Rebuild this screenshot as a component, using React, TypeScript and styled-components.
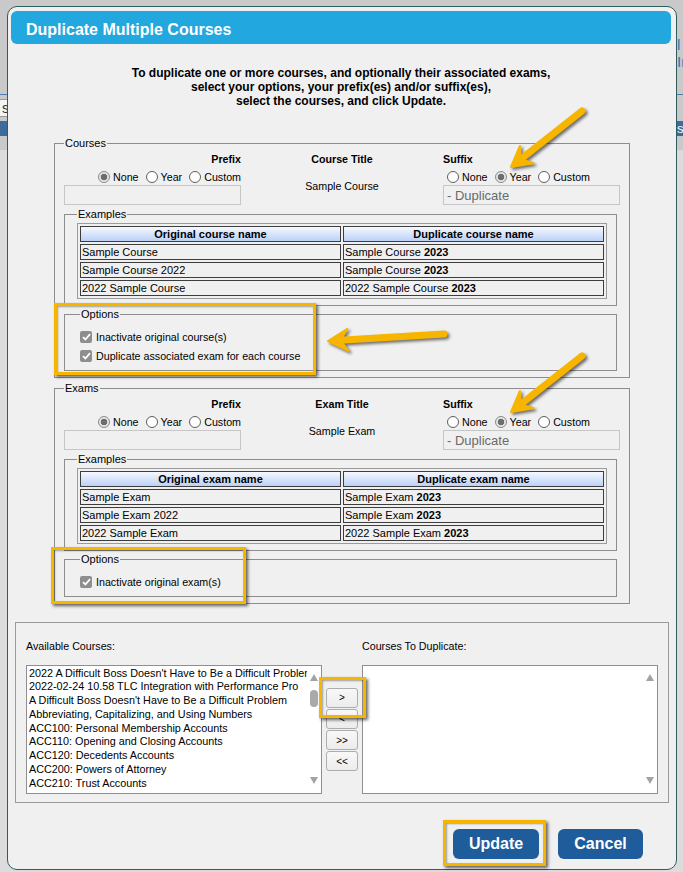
import styled, { createGlobalStyle } from "styled-components"

const GlobalStyle = createGlobalStyle`
  html, body {
    margin: 0;
    padding: 0;
  }
  body {
    width: 683px;
    height: 872px;
    overflow: hidden;
    background: #c9c9c9;
    font-family: "Liberation Sans", Arial, sans-serif;
    font-size: 10.7px;
    color: #000;
  }
`

/* ---------- page behind the modal ---------- */

const Backdrop = styled.div`
  height: 872px;
  display: flex;
  flex-direction: column;
  padding-top: 36px;
  box-sizing: border-box;
`

const BackNav = styled.div`
  padding-left: 677px;
  white-space: nowrap;
  color: #3573b9;
  font-size: 15px;
  line-height: 17px;
`

const BackRule = styled.div`
  margin-top: 24px;
  height: 1px;
  background: #4f7bab;
`

const BackToolbar = styled.div`
  height: 26px;
  display: flex;
  align-items: center;
`

const BackField = styled.div`
  width: 30px;
  height: 18px;
  box-sizing: border-box;
  margin-left: -20px;
  border: 1px solid #9a9a9a;
  background: #f4f4f4;
  font-size: 14px;
  line-height: 16px;
  text-align: right;
  color: #333;
`

const BackHeader = styled.div`
  height: 15px;
  background: #3e6b9e;
  color: #fff;
  font-size: 13px;
  line-height: 15px;
  padding-left: 677px;
  white-space: nowrap;
`

const BackBody = styled.div`
  flex: 1;
  margin-top: 14px;
  background: #dcdcdc;
`

/* ---------- modal ---------- */

const Dialog = styled.div`
  position: absolute;
  left: 7px;
  top: 6px;
  width: 670px;
  box-sizing: border-box;
  border: 1px solid #2d5d5d;
  border-radius: 10px;
  background: #f0f0f0;
  padding: 4px 5px 0 3px;
`

const TitleBar = styled.div`
  height: 33px;
  box-sizing: border-box;
  padding: 5px 0 0 15px;
  border-radius: 6px;
  background: #22a7de;
  color: #fff;
  font-size: 16px;
  font-weight: bold;
  line-height: 28px;
`

const Intro = styled.p`
  margin: 0;
  padding-top: 22px;
  text-align: center;
  font-size: 12px;
  font-weight: bold;
  line-height: 14px;
`

const Group = styled.fieldset<{ $gap?: number }>`
  margin: ${(p) => p.$gap ?? 0}px 41px 0 43px;
  padding: 4px 9px 6px 9px;
  border: 1px solid #8d8d8d;
  min-inline-size: 0;
`

const SubGroup = styled.fieldset<{ $gap: number; $pad: string }>`
  margin: ${(p) => p.$gap}px 3px 0 0;
  padding: ${(p) => p.$pad};
  border: 1px solid #8d8d8d;
  min-inline-size: 0;
`

const Legend = styled.legend`
  padding: 0 1px;
  font-size: 11px;
  line-height: 12px;
`

const NameGrid = styled.div`
  display: grid;
  grid-template-columns: 177px 1fr 177px;
`

const NameColumn = styled.div<{ $align: "flex-start" | "center" | "flex-end" }>`
  display: flex;
  flex-direction: column;
  align-items: ${(p) => p.$align};
`

const ColumnLabel = styled.div`
  font-weight: bold;
  line-height: 13px;
`

const SampleTitle = styled.div`
  margin-top: 14px;
  line-height: 13px;
`

const RadioGroup = styled.div`
  margin-top: 4px;
  height: 14px;
  display: flex;
  align-items: center;
  gap: 3px;
`

const RadioOption = styled.label`
  display: inline-flex;
  align-items: center;
  line-height: 14px;
`

const RadioDot = styled.span<{ $checked?: boolean }>`
  width: 12px;
  height: 12px;
  box-sizing: border-box;
  margin: 0 3px 0 4px;
  border-radius: 50%;
  border: 1px solid ${(p) => (p.$checked ? "#8a8a8a" : "#5e5e5e")};
  background: ${(p) =>
    p.$checked
      ? "radial-gradient(circle, #6e6e6e 0 3px, #e6e6e6 3.6px)"
      : "#fff"};
`

const AffixInput = styled.input`
  margin-top: 1px;
  width: 100%;
  height: 20px;
  box-sizing: border-box;
  border: 1px solid #c6c6c6;
  background: #f0f0f0;
  padding: 0 3px;
  font-family: "Liberation Sans", Arial, sans-serif;
  font-size: 13px;
  color: #6a6a6a;
  outline: none;
`

const ExampleTable = styled.table`
  width: 100%;
  border: 1px solid #9b9b9b;
  border-spacing: 2px;
  font-size: 11px;
`

const HeadCell = styled.th`
  width: 50%;
  padding: 0 1px;
  border: 1px solid #3d3d3d;
  background: linear-gradient(#f5f8ff, #bcd1f6);
  font-weight: bold;
  line-height: 14px;
`

const Cell = styled.td`
  padding: 0 1px;
  border: 1px solid #3d3d3d;
  line-height: 14px;
  white-space: nowrap;
`

const OptionRow = styled.label`
  height: 19.5px;
  display: flex;
  align-items: center;
  gap: 4px;
`

const CheckMark = styled.span`
  width: 12px;
  height: 12px;
  border-radius: 2px;
  background: #8e8e8e;
  display: inline-flex;
  align-items: center;
  justify-content: center;
`

/* ---------- course picker ---------- */

const PickerPanel = styled.div`
  margin: 18px 2px 0 4px;
  padding: 17px 10px 8px 10px;
  border: 1px solid #9b9b9b;
  display: grid;
  grid-template-columns: 296px 32px 296px;
  column-gap: 4px;
  row-gap: 13px;
`

const PickerLabel = styled.div<{ $col: number }>`
  grid-column: ${(p) => p.$col};
  line-height: 12px;
`

const ListBox = styled.div`
  height: 129px;
  box-sizing: border-box;
  border: 1px solid #8f8f8f;
  background: #fff;
  display: flex;
  overflow: hidden;
`

const ListItems = styled.div`
  flex: 1;
  min-width: 0;
  overflow: hidden;
  padding: 1px 0 0 2px;
`

const ListItem = styled.div`
  font-size: 10.8px;
  line-height: 13.8px;
  white-space: nowrap;
`

const ScrollTrack = styled.div`
  width: 14px;
  flex: none;
  display: flex;
  flex-direction: column;
  align-items: center;
  padding: 8px 0 9px;
  box-sizing: border-box;
`

const ScrollArrow = styled.span<{ $dir: "up" | "down" }>`
  width: 0;
  height: 0;
  border-left: 4px solid transparent;
  border-right: 4px solid transparent;
  ${(p) =>
    p.$dir === "up"
      ? "border-bottom: 7px solid #a3a3a3;"
      : "border-top: 7px solid #a3a3a3; margin-top: auto;"}
`

const ScrollThumb = styled.span`
  margin-top: 9px;
  width: 8px;
  height: 17px;
  border-radius: 4px;
  background: #a9a9a9;
`

const MoveColumn = styled.div`
  padding-top: 23px;
  display: flex;
  flex-direction: column;
  gap: 1.3px;
`

const MoveButton = styled.button`
  width: 32px;
  height: 20px;
  padding: 0;
  border: 1px solid #adadad;
  border-radius: 3px;
  background: linear-gradient(#f8f8f8, #ececec);
  font-family: "Liberation Sans", Arial, sans-serif;
  font-size: 10px;
  color: #000;
`

const Footer = styled.div`
  margin-top: 26px;
  padding: 0 28px 10px 0;
  display: flex;
  justify-content: flex-end;
  gap: 19px;
`

const ActionButton = styled.button<{ $width: number }>`
  width: ${(p) => p.$width}px;
  height: 30px;
  border: none;
  border-radius: 6px;
  background: #1f5c9c;
  color: #fff;
  font-family: "Liberation Sans", Arial, sans-serif;
  font-size: 16px;
  font-weight: bold;
`

/* ---------- annotations laid over the modal ---------- */

const Highlight = styled.div<{ $x: number; $y: number; $w: number; $h: number }>`
  position: absolute;
  left: ${(p) => p.$x}px;
  top: ${(p) => p.$y}px;
  width: ${(p) => p.$w}px;
  height: ${(p) => p.$h}px;
  box-sizing: border-box;
  border: 3px solid #f7b500;
  box-shadow: 2px 2px 3px rgba(0, 0, 0, 0.6), inset 1px 1px 2px rgba(0, 0, 0, 0.35);
  pointer-events: none;
`

const ArrowLayer = styled.svg`
  position: absolute;
  left: 0;
  top: 0;
  width: 683px;
  height: 872px;
  pointer-events: none;
  filter: drop-shadow(2px 2px 1.5px rgba(0, 0, 0, 0.55));
`

type ArrowProps = { x1: number; y1: number; x2: number; y2: number }

const Arrow = ({ x1, y1, x2, y2 }: ArrowProps) => {
  const len = Math.hypot(x2 - x1, y2 - y1)
  const ux = (x2 - x1) / len
  const uy = (y2 - y1) / len
  const nx = -uy
  const ny = ux
  const L = 20
  const W = 11
  const bx = x2 - ux * L
  const by = y2 - uy * L
  const mx = x2 - ux * L * 0.62
  const my = y2 - uy * L * 0.62
  const head = `M${x2},${y2} L${bx + nx * W},${by + ny * W} L${mx},${my} L${bx - nx * W},${by - ny * W} Z`
  return (
    <g>
      <line x1={x1} y1={y1} x2={mx} y2={my} stroke="#f7b500" strokeWidth={7} strokeLinecap="round" />
      <path d={head} fill="#f7b500" stroke="#f7b500" strokeWidth={2} strokeLinejoin="round" />
    </g>
  )
}

/* ---------- data ---------- */

type Section = {
  legend: string
  titleLabel: string
  sample: string
  headers: [string, string]
  rows: [string, string][]
  options: string[]
  gap: number
}

const sections: Section[] = [
  {
    legend: "Courses",
    titleLabel: "Course Title",
    sample: "Sample Course",
    headers: ["Original course name", "Duplicate course name"],
    rows: [
      ["Sample Course", "Sample Course"],
      ["Sample Course 2022", "Sample Course"],
      ["2022 Sample Course", "2022 Sample Course"],
    ],
    options: ["Inactivate original course(s)", "Duplicate associated exam for each course"],
    gap: 29,
  },
  {
    legend: "Exams",
    titleLabel: "Exam Title",
    sample: "Sample Exam",
    headers: ["Original exam name", "Duplicate exam name"],
    rows: [
      ["Sample Exam", "Sample Exam"],
      ["Sample Exam 2022", "Sample Exam"],
      ["2022 Sample Exam", "2022 Sample Exam"],
    ],
    options: ["Inactivate original exam(s)"],
    gap: 4,
  },
]

const availableCourses = [
  "2022 A Difficult Boss Doesn't Have to Be a Difficult Problem",
  "2022-02-24 10.58 TLC Integration with Performance Pro",
  "A Difficult Boss Doesn't Have to Be a Difficult Problem",
  "Abbreviating, Capitalizing, and Using Numbers",
  "ACC100: Personal Membership Accounts",
  "ACC110: Opening and Closing Accounts",
  "ACC120: Decedents Accounts",
  "ACC200: Powers of Attorney",
  "ACC210: Trust Accounts",
  "Accounting for Stock Transactions",
]

const Radios = ({ checked }: { checked: string }) => (
  <RadioGroup>
    {["None", "Year", "Custom"].map((label) => (
      <RadioOption key={label}>
        <RadioDot $checked={label === checked} />
        {label}
      </RadioOption>
    ))}
  </RadioGroup>
)

const Check = () => (
  <CheckMark>
    <svg width="9" height="8" viewBox="0 0 9 8">
      <path d="M1 4.2 L3.4 6.5 L8 1.2" fill="none" stroke="#fff" strokeWidth="1.8" />
    </svg>
  </CheckMark>
)

const DuplicateSection = ({ section }: { section: Section }) => (
  <Group $gap={section.gap}>
    <Legend>{section.legend}</Legend>
    <NameGrid>
      <NameColumn $align="flex-end">
        <ColumnLabel>Prefix</ColumnLabel>
        <Radios checked="None" />
        <AffixInput readOnly value="" />
      </NameColumn>
      <NameColumn $align="center">
        <ColumnLabel>{section.titleLabel}</ColumnLabel>
        <SampleTitle>{section.sample}</SampleTitle>
      </NameColumn>
      <NameColumn $align="flex-start">
        <ColumnLabel>Suffix</ColumnLabel>
        <Radios checked="Year" />
        <AffixInput readOnly value="- Duplicate" />
      </NameColumn>
    </NameGrid>
    <SubGroup $gap={3} $pad="3px 9px 6px 12px">
      <Legend>Examples</Legend>
      <ExampleTable>
        <thead>
          <tr>
            <HeadCell>{section.headers[0]}</HeadCell>
            <HeadCell>{section.headers[1]}</HeadCell>
          </tr>
        </thead>
        <tbody>
          {section.rows.map(([original, duplicate]) => (
            <tr key={original}>
              <Cell>{original}</Cell>
              <Cell>
                {duplicate} <b>2023</b>
              </Cell>
            </tr>
          ))}
        </tbody>
      </ExampleTable>
    </SubGroup>
    <SubGroup $gap={2} $pad="7px 9px 4px 15px">
      <Legend>Options</Legend>
      {section.options.map((option) => (
        <OptionRow key={option}>
          <Check />
          {option}
        </OptionRow>
      ))}
    </SubGroup>
  </Group>
)

export default function App() {
  return (
    <>
      <GlobalStyle />
      <Backdrop>
        <BackNav>l</BackNav>
        <BackNav>In</BackNav>
        <BackRule />
        <BackToolbar>
          <BackField>s</BackField>
        </BackToolbar>
        <BackHeader>s</BackHeader>
        <BackBody />
      </Backdrop>

      <Dialog>
        <TitleBar>Duplicate Multiple Courses</TitleBar>
        <Intro>
          To duplicate one or more courses, and optionally their associated exams,
          <br />
          select your options, your prefix(es) and/or suffix(es),
          <br />
          select the courses, and click Update.
        </Intro>

        {sections.map((section) => (
          <DuplicateSection key={section.legend} section={section} />
        ))}

        <PickerPanel>
          <PickerLabel $col={1}>Available Courses:</PickerLabel>
          <PickerLabel $col={3}>Courses To Duplicate:</PickerLabel>
          <ListBox>
            <ListItems>
              {availableCourses.map((course) => (
                <ListItem key={course}>{course}</ListItem>
              ))}
            </ListItems>
            <ScrollTrack>
              <ScrollArrow $dir="up" />
              <ScrollThumb />
              <ScrollArrow $dir="down" />
            </ScrollTrack>
          </ListBox>
          <MoveColumn>
            <MoveButton>&gt;</MoveButton>
            <MoveButton>&lt;</MoveButton>
            <MoveButton>&gt;&gt;</MoveButton>
            <MoveButton>&lt;&lt;</MoveButton>
          </MoveColumn>
          <ListBox>
            <ListItems />
            <ScrollTrack>
              <ScrollArrow $dir="up" />
              <ScrollArrow $dir="down" />
            </ScrollTrack>
          </ListBox>
        </PickerPanel>

        <Footer>
          <ActionButton $width={86}>Update</ActionButton>
          <ActionButton $width={85}>Cancel</ActionButton>
        </Footer>
      </Dialog>

      <Highlight $x={54} $y={303} $w={262} $h={72} />
      <Highlight $x={51} $y={547} $w={195} $h={57} />
      <Highlight $x={319} $y={677} $w={47} $h={41} />
      <Highlight $x={443} $y={820} $w={103} $h={46} />

      <ArrowLayer viewBox="0 0 683 872">
        <Arrow x1={582} y1={111} x2={511} y2={167} />
        <Arrow x1={444} y1={334} x2={328} y2={341} />
        <Arrow x1={582} y1={356} x2={511} y2={412} />
      </ArrowLayer>
    </>
  )
}
